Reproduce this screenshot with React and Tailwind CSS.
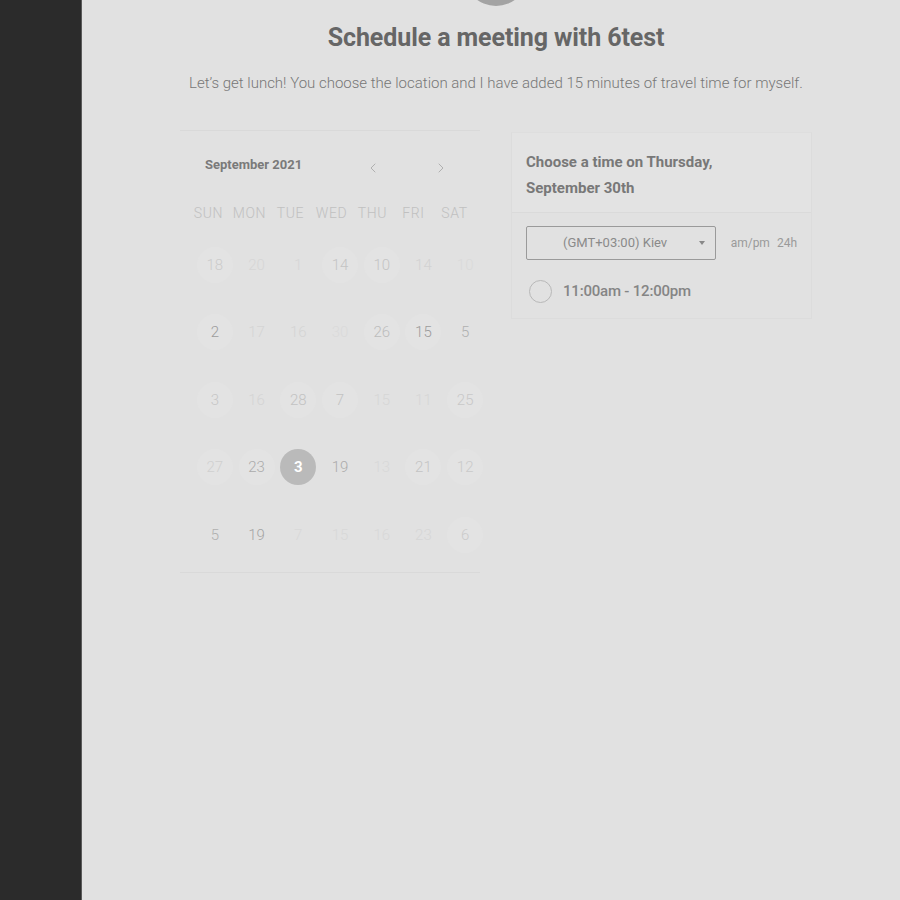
import { ChevronLeft, ChevronRight } from 'lucide-react';

const WEEKDAYS = ['SUN', 'MON', 'TUE', 'WED', 'THU', 'FRI', 'SAT'];

// n: label, t: text tone, c: faint circle behind, s: selected
const ROWS = [
  [
    { n: 18, t: 'text-[#cbcbcb]', c: true },
    { n: 20, t: 'text-[#d6d6d6]' },
    { n: 1, t: 'text-[#d6d6d6]' },
    { n: 14, t: 'text-[#c4c4c4]', c: true },
    { n: 10, t: 'text-[#c4c4c4]', c: true },
    { n: 14, t: 'text-[#d2d2d2]' },
    { n: 10, t: 'text-[#dadada]' },
  ],
  [
    { n: 2, t: 'text-[#9c9c9c]', c: true },
    { n: 17, t: 'text-[#d4d4d4]' },
    { n: 16, t: 'text-[#d4d4d4]' },
    { n: 30, t: 'text-[#dadada]' },
    { n: 26, t: 'text-[#bcbcbc]', c: true },
    { n: 15, t: 'text-[#9c9c9c]', c: true },
    { n: 5, t: 'text-[#b0b0b0]' },
  ],
  [
    { n: 3, t: 'text-[#c6c6c6]', c: true },
    { n: 16, t: 'text-[#d4d4d4]' },
    { n: 28, t: 'text-[#c2c2c2]', c: true },
    { n: 7, t: 'text-[#c2c2c2]', c: true },
    { n: 15, t: 'text-[#d6d6d6]' },
    { n: 11, t: 'text-[#d6d6d6]' },
    { n: 25, t: 'text-[#c8c8c8]', c: true },
  ],
  [
    { n: 27, t: 'text-[#d0d0d0]', c: true },
    { n: 23, t: 'text-[#ababab]', c: true },
    { n: 3, t: 'text-white', s: true },
    { n: 19, t: 'text-[#ababab]' },
    { n: 13, t: 'text-[#d8d8d8]' },
    { n: 21, t: 'text-[#c4c4c4]', c: true },
    { n: 12, t: 'text-[#cacaca]', c: true },
  ],
  [
    { n: 5, t: 'text-[#b0b0b0]' },
    { n: 19, t: 'text-[#a4a4a4]' },
    { n: 7, t: 'text-[#d8d8d8]' },
    { n: 15, t: 'text-[#d8d8d8]' },
    { n: 16, t: 'text-[#d8d8d8]' },
    { n: 23, t: 'text-[#d6d6d6]' },
    { n: 6, t: 'text-[#cacaca]', c: true },
  ],
];

function Day({ d }) {
  let bg = 'font-light';
  if (d.s) bg = 'bg-[#bababa] font-bold';
  else if (d.c) bg = 'bg-[#e3e3e3] font-light';
  return (
    <div className="flex items-center justify-center h-[67.5px]">
      <div className={`w-9 h-9 rounded-full flex items-center justify-center text-[15px] ${bg} ${d.t}`}>
        {d.n}
      </div>
    </div>
  );
}

function Calendar() {
  return (
    <div className="w-[300px] border-y border-[#d9d9d9] pt-[22px] pb-[3px] px-[12px]">
      <div className="flex items-center h-6">
        <span className="ml-[13px] text-[13px] font-bold text-[#7a7a7a]">September 2021</span>
        <ChevronLeft className="ml-[63px] mt-1.5 text-[#b0b0b0]" size={16} strokeWidth={1.5} />
        <ChevronRight className="ml-[52px] mt-1.5 text-[#b0b0b0]" size={16} strokeWidth={1.5} />
      </div>
      <div className="grid grid-cols-7 mt-[26px] w-[287px] -ml-[4px] text-[14px] font-light text-[#c0c0c0] text-center tracking-[0.6px]">
        {WEEKDAYS.map((w) => (
          <span key={w}>{w}</span>
        ))}
      </div>
      <div className="grid grid-cols-7 mt-[7px] w-[292px] ml-[2px]">
        {ROWS.flat().map((d, i) => (
          <Day key={i} d={d} />
        ))}
      </div>
    </div>
  );
}

function TimePanel() {
  return (
    <div className="w-[301px] border border-[#dcdcdc] border-t-[#dedede]">
      <div className="bg-[#e3e3e3] border-b border-[#dadada] px-[14px] pt-[16px] pb-[11px] text-[15px] leading-[26px] font-bold text-[#787878]">
        Choose a time on Thursday,<br />September 30th
      </div>
      <div className="flex items-center px-[14px] pt-[13px]">
        <div className="relative w-[193px] h-[34px] border border-[#9a9a9a] rounded-[2px] flex items-center">
          <span className="ml-[36px] text-[13px] text-[#8a8a8a]">(GMT+03:00) Kiev</span>
          <span className="absolute right-[10px] top-[14px] w-0 h-0 border-x-[3px] border-x-transparent border-t-[4px] border-t-[#888]" />
        </div>
        <span className="ml-[15px] text-[12px] text-[#9a9a9a]">am/pm</span>
        <span className="ml-[7px] text-[12px] text-[#9a9a9a]">24h</span>
      </div>
      <div className="flex items-center px-[17px] pt-[20px] pb-[15px]">
        <span className="w-[23px] h-[23px] rounded-full border-[1.5px] border-[#b8b8b8]" />
        <span className="ml-[11px] text-[15px] font-medium tracking-[-0.2px] text-[#858585]">11:00am - 12:00pm</span>
      </div>
    </div>
  );
}

export default function App() {
  return (
    <div className="flex h-[900px] overflow-hidden font-['Roboto',sans-serif]">
      <aside className="w-[82px] shrink-0 bg-[#2b2b2b] border-r border-[#5a5a5a]" />
      <main className="flex-1 bg-[#e1e1e1] pl-[10px] flex flex-col items-center">
        <div className="w-16 h-16 -mt-[58px] rounded-full bg-[#a3a3a3]" />
        <h1 className="mt-[17px] text-[25px] font-bold tracking-[-0.1px] text-[#666] leading-[30px]">
          Schedule a meeting with 6test
        </h1>
        <p className="mt-[20px] text-[15px] font-light text-[#777] leading-[20px]">
          Let’s get lunch! You choose the location and I have added 15 minutes of travel time for myself.
        </p>
        <div className="mt-[37px] flex items-start gap-[31px]">
          <Calendar />
          <div className="mt-[2px]">
            <TimePanel />
          </div>
        </div>
      </main>
    </div>
  );
}
